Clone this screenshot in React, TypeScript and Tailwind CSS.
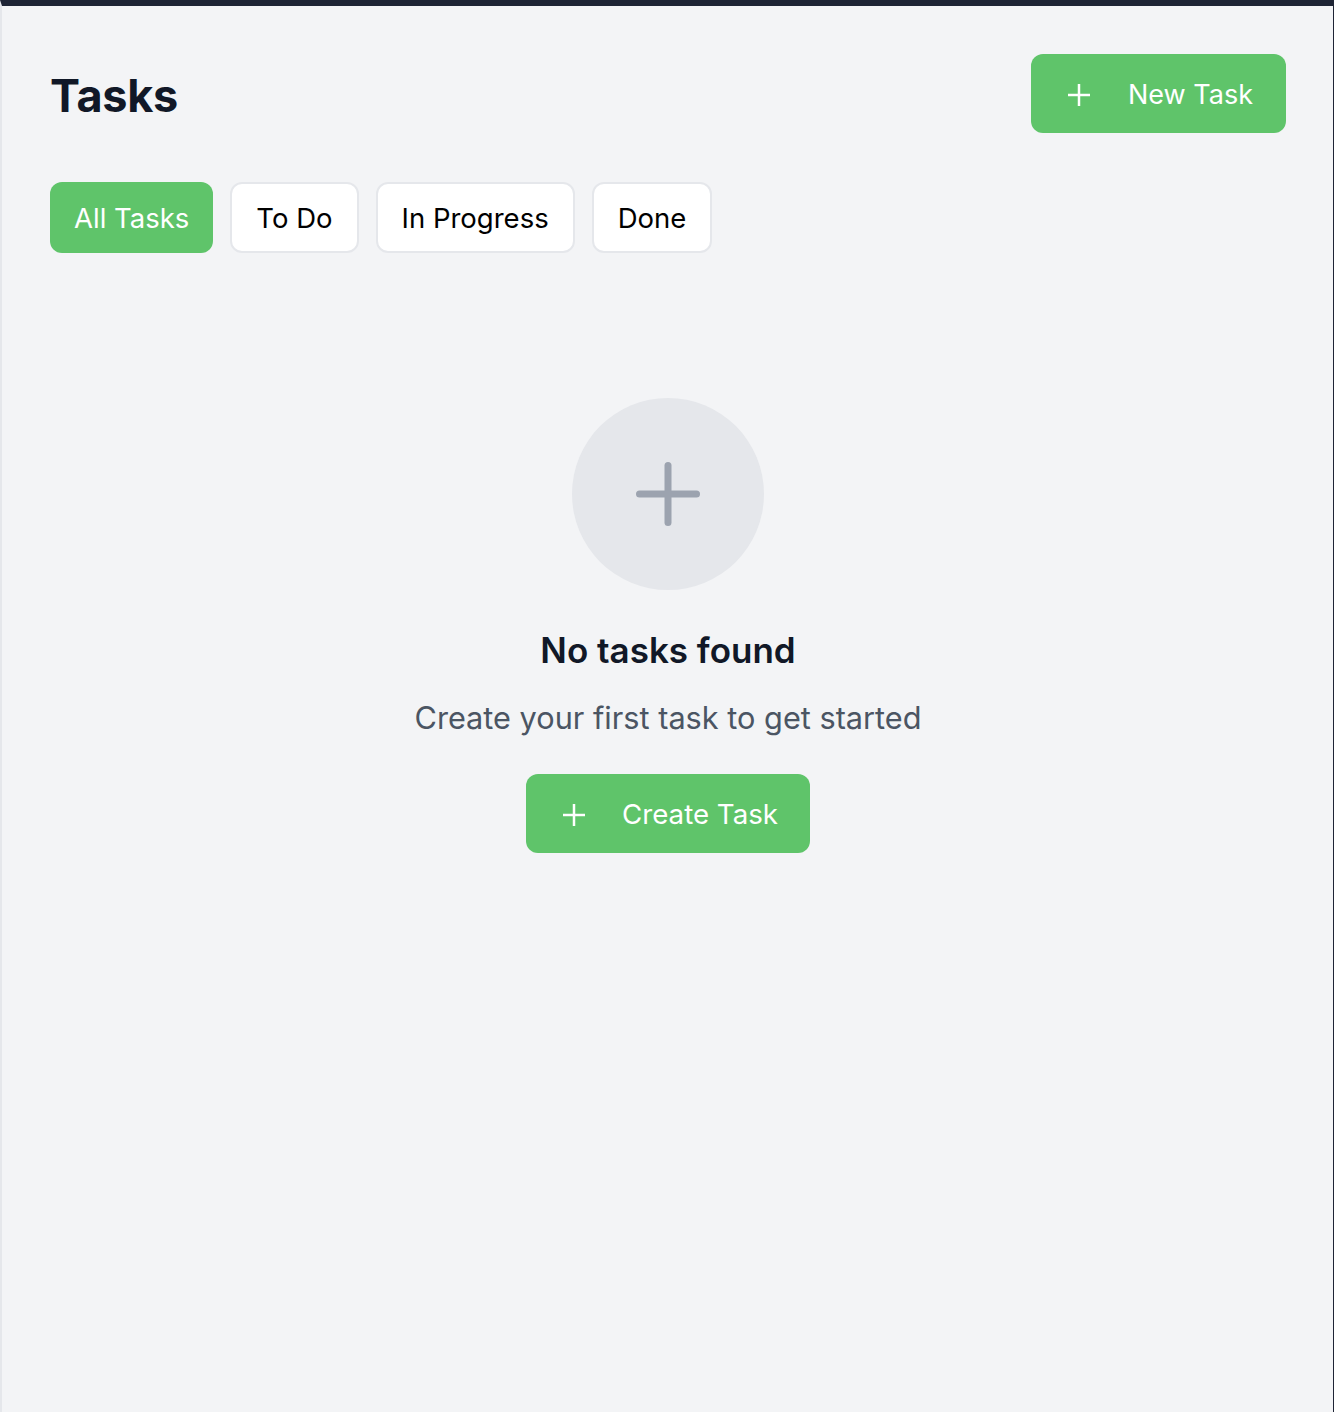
import React from "react";

function SmallPlus() {
  return (
    <svg width="22" height="22" viewBox="0 0 22 22" fill="none" stroke="currentColor" strokeWidth="2.5">
      <line x1="11" y1="0" x2="11" y2="22" />
      <line x1="0" y1="11" x2="22" y2="11" />
    </svg>
  );
}

export default function App() {
  const tabs = ["All Tasks", "To Do", "In Progress", "Done"];
  return (
    <div
      className="min-h-[1412px] bg-[#f3f4f6] border-t-[6px] border-t-[#1e2435] border-l-2 border-l-[#e5e7eb] border-r border-r-[#1e2435]"
      style={{ fontFamily: "Inter, 'Noto Sans', sans-serif" }}
    >
      <div className="pl-12 pr-[47px] pt-12">
        <div className="flex items-center justify-between">
          <h1 className="text-[45px] font-bold text-[#111827] pt-[4px] tracking-[-0.3px]">Tasks</h1>
          <button className="flex items-center h-[79px] w-[255px] pl-[37px] pt-[3px] rounded-[12px] bg-[#5fc46a] text-white text-[27px]">
            <SmallPlus />
            <span className="ml-[38px]">New Task</span>
          </button>
        </div>
        <div className="flex gap-[17px] mt-[49px]">
          {tabs.map((t, i) => (
            <button
              key={t}
              className={
                i === 0
                  ? "h-[71px] px-6 pt-[3px] rounded-[12px] bg-[#5fc46a] text-white text-[27.5px]"
                  : "h-[71px] px-6 pt-[3px] rounded-[12px] bg-white border-2 border-[#e5e7eb] text-black text-[27.5px]"
              }
            >
              {t}
            </button>
          ))}
        </div>
        <div className="flex flex-col items-center mt-[145px]">
          <div className="w-[192px] h-[192px] rounded-full bg-[#e5e7eb] flex items-center justify-center">
            <svg width="64" height="64" viewBox="0 0 64 64" fill="none" stroke="#9ca3af" strokeWidth="7" strokeLinecap="round">
              <line x1="32" y1="3.5" x2="32" y2="60.5" />
              <line x1="3.5" y1="32" x2="60.5" y2="32" />
            </svg>
          </div>
          <h2 className="mt-[36px] text-[35px] leading-[48px] font-semibold text-[#111827]">No tasks found</h2>
          <p className="mt-[23px] text-[30.7px] leading-[42px] text-[#4b5563]">Create your first task to get started</p>
          <button className="mt-[35px] flex items-center h-[79px] w-[284px] pl-[37px] pt-[3px] rounded-[12px] bg-[#5fc46a] text-white text-[27.7px]">
            <SmallPlus />
            <span className="ml-[37px]">Create Task</span>
          </button>
        </div>
      </div>
    </div>
  );
}
